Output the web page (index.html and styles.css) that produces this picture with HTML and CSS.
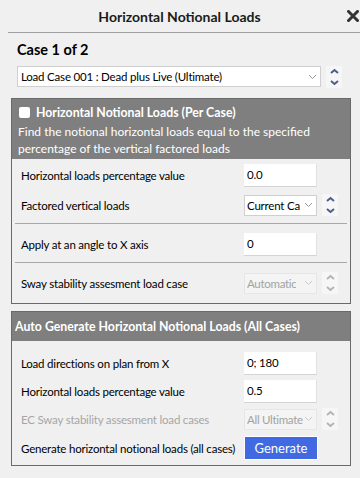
FILE: index.html
```html
<!DOCTYPE html>
<html lang="en">
<head>
    <meta charset="UTF-8" />
    <title>Horizontal Notional Loads</title>
    <link rel="stylesheet" href="styles.css">
</head>
<body>
<div class="dialog">
    <header class="title-bar">
        <h1>Horizontal Notional Loads</h1>
        <button class="close-btn" aria-label="Close">
            <svg width="12" height="12" viewBox="0 0 12 12"><path d="M1.5 1.5 L10.5 10.5 M10.5 1.5 L1.5 10.5" stroke="#333" stroke-width="3" stroke-linecap="square"/></svg>
        </button>
    </header>

    <div class="case-picker">
        <h2>Case 1 of 2</h2>
        <div class="combo-row">
            <div class="select wide">
                <span>Load Case 001 : Dead plus Live (Ultimate)</span>
                <svg class="chev" width="9" height="6" viewBox="0 0 9 6"><path d="M1 1 L4.5 4.5 L8 1" fill="none" stroke="#9a9a9a" stroke-width="1"/></svg>
            </div>
            <div class="spinner">
                <svg width="16" height="22" viewBox="0 0 16 22"><path d="M5 7 L8.5 4 L12 7" fill="none" stroke="#4a5d8c" stroke-width="2"/><path d="M5 15 L8.5 18 L12 15" fill="none" stroke="#4a5d8c" stroke-width="2"/></svg>
            </div>
        </div>
    </div>

    <section class="panel">
        <div class="panel-head tall">
            <label class="check-title"><span class="checkbox"></span>Horizontal Notional Loads (Per Case)</label>
            <p>Find the notional horizontal loads equal to the specified percentage of the vertical factored loads</p>
        </div>
        <div class="panel-body first">
            <div class="row">
                <span class="label">Horizontal loads percentage value</span>
                <div class="input">0.0</div>
            </div>
            <div class="row">
                <span class="label">Factored vertical loads</span>
                <div class="select">
                    <span>Current Ca</span>
                    <svg class="chev" width="9" height="6" viewBox="0 0 9 6"><path d="M1 1 L4.5 4.5 L8 1" fill="none" stroke="#9a9a9a" stroke-width="1"/></svg>
                </div>
                <div class="spinner">
                    <svg width="16" height="22" viewBox="0 0 16 22"><path d="M5 7 L8.5 4 L12 7" fill="none" stroke="#4a5d8c" stroke-width="2"/><path d="M5 15 L8.5 18 L12 15" fill="none" stroke="#4a5d8c" stroke-width="2"/></svg>
                </div>
            </div>
            <hr>
            <div class="row">
                <span class="label">Apply at an angle to X axis</span>
                <div class="input">0</div>
            </div>
            <hr>
            <div class="row">
                <span class="label">Sway stability assesment load case</span>
                <div class="select disabled">
                    <span>Automatic</span>
                    <svg class="chev" width="9" height="6" viewBox="0 0 9 6"><path d="M1 1 L4.5 4.5 L8 1" fill="none" stroke="#c8c8c8" stroke-width="1"/></svg>
                </div>
                <div class="spinner disabled">
                    <svg width="16" height="22" viewBox="0 0 16 22"><path d="M5 7 L8.5 4 L12 7" fill="none" stroke="#b4b4b4" stroke-width="2"/><path d="M5 15 L8.5 18 L12 15" fill="none" stroke="#b4b4b4" stroke-width="2"/></svg>
                </div>
            </div>
        </div>
    </section>

    <section class="panel second">
        <div class="panel-head">
            <h3>Auto Generate Horizontal Notional Loads (All Cases)</h3>
        </div>
        <div class="panel-body">
            <div class="row short">
                <span class="label">Load directions on plan from X</span>
                <div class="input">0; 180</div>
            </div>
            <div class="row short">
                <span class="label">Horizontal loads percentage value</span>
                <div class="input">0.5</div>
            </div>
            <div class="row short">
                <span class="label muted">EC Sway stability assesment load cases</span>
                <div class="select disabled">
                    <span>All Ultimate</span>
                    <svg class="chev" width="9" height="6" viewBox="0 0 9 6"><path d="M1 1 L4.5 4.5 L8 1" fill="none" stroke="#c8c8c8" stroke-width="1"/></svg>
                </div>
                <div class="spinner disabled">
                    <svg width="16" height="22" viewBox="0 0 16 22"><path d="M5 7 L8.5 4 L12 7" fill="none" stroke="#b4b4b4" stroke-width="2"/><path d="M5 15 L8.5 18 L12 15" fill="none" stroke="#b4b4b4" stroke-width="2"/></svg>
                </div>
            </div>
            <div class="row">
                <span class="label">Generate horizontal notional loads (all cases)</span>
                <button class="generate-btn">Generate</button>
            </div>
        </div>
    </section>
</div>
</body>
</html>
```

FILE: styles.css
```css
body {
  margin: 0;
  background-color: #f0f0f0;
  font-family: Lato, "Noto Sans", sans-serif;
  font-size: 11.5px;
  letter-spacing: -0.2px;
  color: #000;
}

.dialog {
  width: 360px;
  height: 478px;
  overflow: hidden;
}

.title-bar {
  display: flex;
  align-items: center;
  height: 32px;
  margin-left: 8px;
  border-bottom: 1px solid #a0a0a0;
}

.title-bar h1 {
  flex: 1;
  margin: 0;
  padding-left: 4px;
  text-align: center;
  font-size: 14px;
  letter-spacing: 0;
  font-weight: bold;
  color: #1a1a1a;
}

.close-btn {
  width: 13px;
  height: 20px;
  padding: 0;
  border: none;
  background: none;
  display: flex;
  align-items: center;
  justify-content: flex-start;
}

.case-picker {
  padding: 0 0 0 17px;
}

.case-picker h2 {
  margin: 0;
  padding-top: 8px;
  height: 24px;
  font-size: 14.5px;
  letter-spacing: 0;
  font-weight: bold;
}

.combo-row {
  display: flex;
  align-items: flex-start;
  margin-top: 1px;
}

.select {
  box-sizing: border-box;
  width: 73px;
  height: 21px;
  display: flex;
  align-items: center;
  justify-content: space-between;
  padding: 0 3px 0 2px;
  background: #fff;
  border: 1px solid #cfcfcf;
  white-space: nowrap;
  overflow: hidden;
}

.select span {
  overflow: hidden;
}

.select.wide {
  width: 304px;
  padding-left: 3px;
}

.select.disabled {
  background: #f4f4f4;
  border-color: #e6e6e6;
  color: #a2a2a2;
}

.select.disabled span {
  letter-spacing: -0.3px;
}

.chev {
  flex-shrink: 0;
  margin-left: 1px;
}

.spinner {
  width: 16px;
  height: 22px;
  margin-left: 5px;
  background: #f6f6f6;
}

.panel {
  margin: 10px 0 0 11px;
  width: 340px;
  box-sizing: border-box;
  border: 1px solid #6a6a6a;
}

.panel.second {
  margin-top: 7px;
}

.panel-head {
  background: #7f7f7f;
  color: #fff;
  height: 29px;
  padding: 0 3px;
  display: flex;
  align-items: center;
}

.panel-head.tall {
  height: 60px;
  padding: 6px 6px 0 6px;
  box-sizing: border-box;
  display: block;
}

.panel-head h3 {
  margin: 0;
  font-size: 12.3px;
  letter-spacing: 0;
  font-weight: bold;
}

.check-title {
  display: flex;
  align-items: center;
  gap: 6px;
  font-weight: bold;
  font-size: 12.3px;
  letter-spacing: 0;
  height: 14px;
}

.checkbox {
  width: 11px;
  height: 11px;
  margin-left: 1px;
  background: #fff;
  border-radius: 2px;
}

.panel-head p {
  margin: 4px 0 0;
  font-size: 12px;
  letter-spacing: 0;
  line-height: 17px;
}

.panel-body {
  padding: 8px 3px 2px 3px;
}

.panel-body.first {
  padding: 1px 3px 5px 3px;
}

.row {
  display: flex;
  align-items: center;
  height: 30px;
  padding-left: 6px;
}

.row.short {
  height: 28px;
}

.label {
  flex: 0 0 223px;
  min-width: 0;
  white-space: nowrap;
}

.label.muted {
  color: #a6a6a6;
}

.input {
  box-sizing: border-box;
  width: 73px;
  height: 23px;
  padding: 4px 3px 0;
  background: #fff;
  border-bottom: 1px solid #d4d4d4;
  border-right: 1px solid #e2e2e2;
}

.generate-btn {
  width: 74px;
  height: 24px;
  background: #4169e1;
  border: 1px solid #fff;
  color: #fff;
  font-family: inherit;
  font-size: 13px;
  letter-spacing: 0;
  padding: 0;
}

hr {
  margin: 3px 0 5px;
  border: none;
  border-top: 1px solid #a8a8a8;
}
```
